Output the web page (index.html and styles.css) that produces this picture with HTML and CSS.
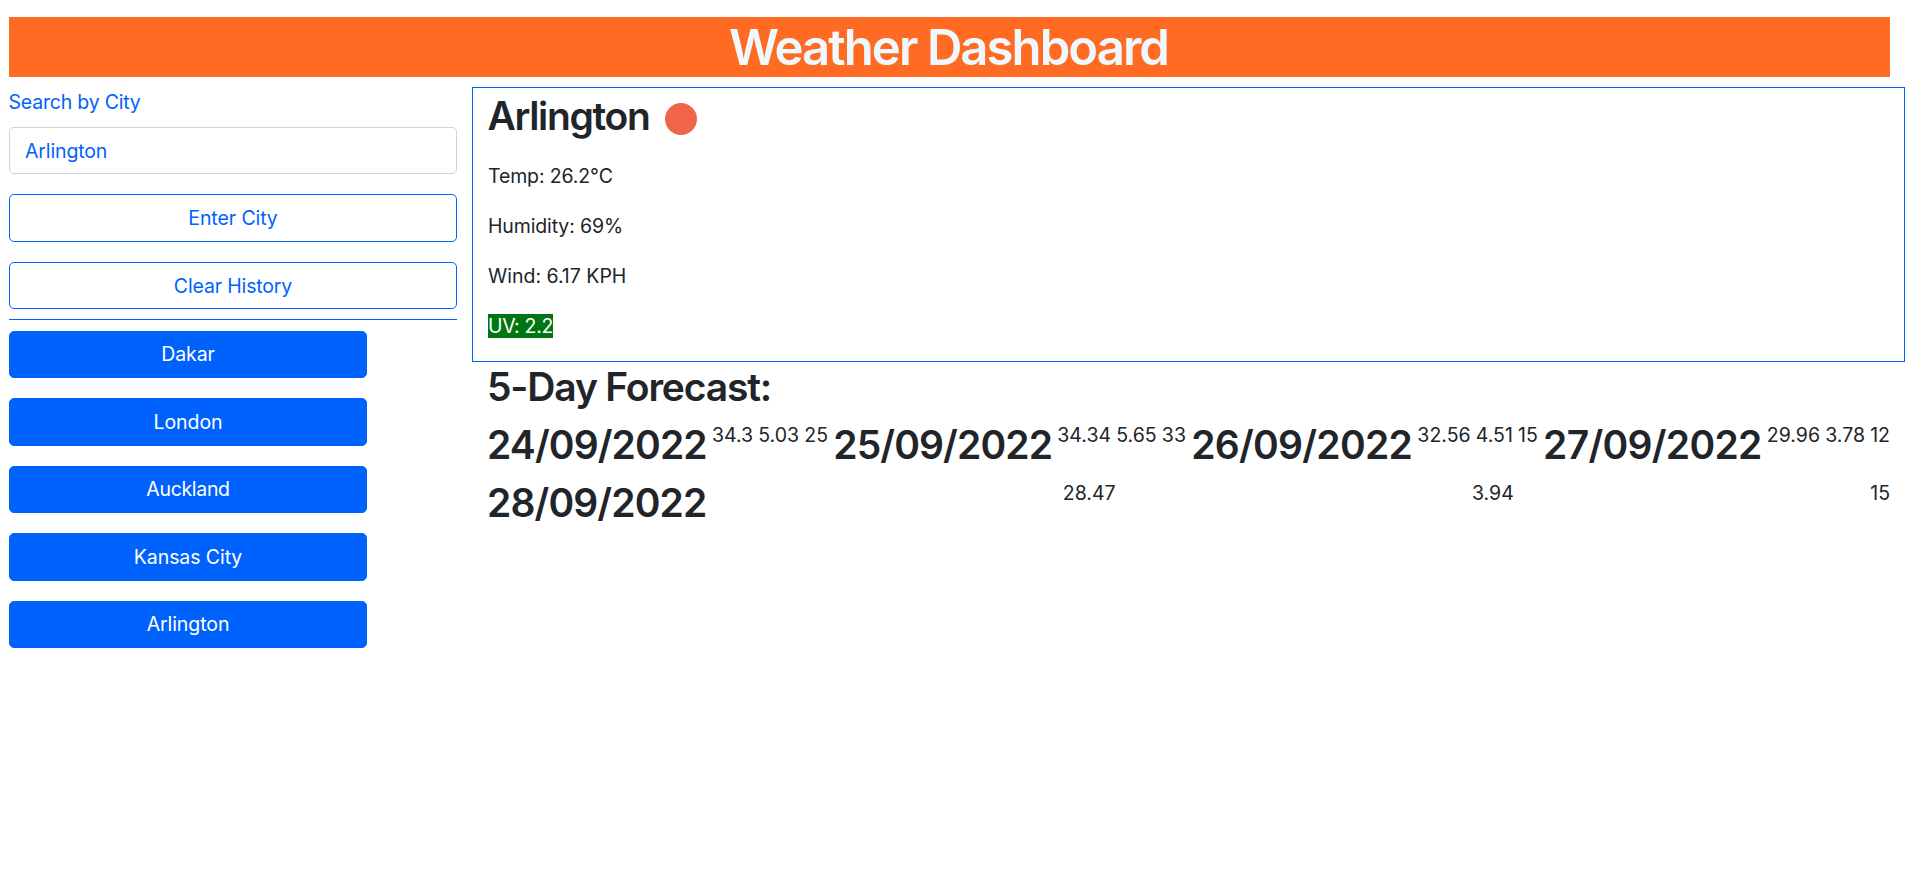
FILE: index.html
```html
<!DOCTYPE html>
<html lang="en">
<head>
<meta charset="utf-8">
<title>Weather Dashboard</title>
<link rel="stylesheet" href="styles.css">
</head>
<body>
<header class="banner"><h1 class="title">Weather Dashboard</h1></header>
<main class="layout">
  <aside class="sidebar">
    <label class="search-label" for="city">Search by City</label>
    <input class="search-input" id="city" type="text" value="Arlington">
    <button class="btn btn-outline">Enter City</button>
    <button class="btn btn-outline btn-clear">Clear History</button>
    <div class="history">
      <button class="btn btn-primary">Dakar</button>
      <button class="btn btn-primary">London</button>
      <button class="btn btn-primary btn-tight">Auckland</button>
      <button class="btn btn-primary">Kansas City</button>
      <button class="btn btn-primary">Arlington</button>
    </div>
  </aside>
  <section class="content">
    <div class="current">
      <h2 class="heading city-heading">Arlington<svg class="sun" viewBox="0 0 32 32"><circle cx="16" cy="16" r="16"/></svg></h2>
      <p class="reading">Temp: 26.2°C</p>
      <p class="reading">Humidity: 69%</p>
      <p>Wind: 6.17 KPH</p>
      <p><span class="uv">UV: 2.2</span></p>
    </div>
    <div class="forecast">
      <h2 class="heading forecast-heading">5-Day Forecast:</h2>
      <div class="days">
        <h2 class="heading date">24/09/2022</h2><p>34.3</p><p>5.03</p><p>25</p>
        <h2 class="heading date">25/09/2022</h2><p>34.34</p><p>5.65</p><p>33</p>
        <h2 class="heading date date-wide">26/09/2022</h2><p>32.56</p><p>4.51</p><p>15</p>
        <h2 class="heading date date-wide">27/09/2022</h2><p>29.96</p><p>3.78</p><p>12</p>
      </div>
      <div class="days">
        <h2 class="heading date">28/09/2022</h2><p>28.47</p><p>3.94</p><p>15</p>
      </div>
    </div>
  </section>
</main>
</body>
</html>
```
FILE: styles.css
```css
* { box-sizing: border-box; }
body {
  margin: 0;
  padding: 17px 0 0 9px;
  background: #fff;
  color: #212529;
  font: 400 19.5px/30px Inter, "Liberation Sans", sans-serif;
}
h1, h2, p { margin: 0; }
.banner { width: 1881px; height: 60px; background: #ff6b22; }
.title {
  padding: 1px 2px 0 0;
  color: #f0f8ff;
  font-size: 49px;
  font-weight: 600;
  letter-spacing: -1.92px;
  line-height: 60px;
  text-align: center;
}
.layout { display: flex; gap: 15px; margin-top: 10px; }
.sidebar { width: 448px; color: #0062fc; }
.search-label { display: block; margin: 0 0 10px -0.5px; letter-spacing: -0.2px; }
.search-input {
  display: block;
  width: 100%;
  height: 47px;
  margin: 0 0 20px;
  padding: 7px 15px;
  border: 1px solid #ced4da;
  border-radius: 5px;
  background: #fff;
  color: #0062fc;
  font: inherit;
  letter-spacing: -0.13px;
}
.btn {
  display: block;
  width: 100%;
  height: 47.5px;
  margin: 0 0 20px;
  padding: 0;
  border: 1px solid #0062fc;
  border-radius: 5px;
  background: #fff;
  color: #0062fc;
  font: inherit;
  letter-spacing: -0.08px;
}
.btn-clear { padding-top: 1px; letter-spacing: -0.15px; }
.history { margin-top: -10px; padding-top: 10.5px; border-top: 1px solid #0062fc; }
.btn-primary { width: 358px; background: #0062fc; color: #fff; }
.btn-tight { letter-spacing: -0.32px; }
.content { width: 1433px; }
.current { height: 275px; padding: 4px 15px 0; border: 1px solid #0062fc; }
.current p { margin-bottom: 20px; }
.reading { letter-spacing: -0.13px; }
.heading { height: 48px; font-size: 39px; font-weight: 600; line-height: 48px; }
.city-heading {
  display: flex;
  align-items: center;
  gap: 15.5px;
  margin: 0 0 21px -0.5px;
  letter-spacing: -1.35px;
}
.sun { width: 32px; height: 32px; margin-top: 6px; fill: #f0644a; }
.uv { background: #007613; color: #fff; letter-spacing: -0.32px; }
.forecast { padding: 1px 15px 0; }
.forecast-heading { letter-spacing: -1.17px; }
.date { letter-spacing: -0.88px; }
.date-wide { letter-spacing: -0.71px; }
.days { display: flex; justify-content: space-between; margin-top: 10px; }
.days p { margin-top: -1px; }
```
